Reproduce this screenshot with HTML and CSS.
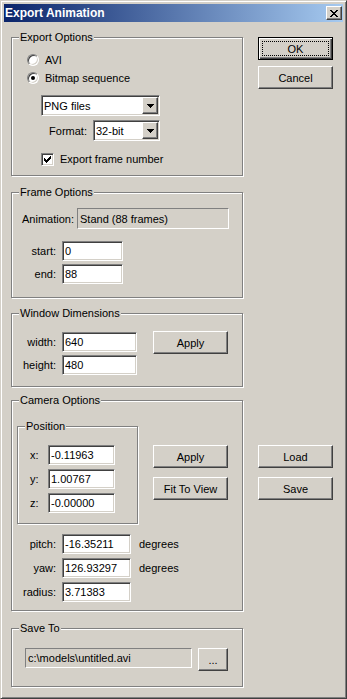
FILE: index.html
```html
<!DOCTYPE html>
<html lang="en">
<head>
    <meta charset="UTF-8">
    <meta name="viewport" content="width=device-width, initial-scale=1.0">
    <title>Export Animation</title>
    <link rel="stylesheet" href="styles.css">
</head>
<body>

    <div class="window">
        <div class="titlebar">
            <span class="title">Export Animation</span>
            <button class="close-btn raised">
                <svg width="8" height="7" viewBox="0 0 8 7"><path d="M0 0h2v1h-2zM6 0h2v1h-2zM1 1h2v1h-2zM5 1h2v1h-2zM2 2h4v1h-4zM3 3h2v1h-2zM2 4h4v1h-4zM1 5h2v1h-2zM5 5h2v1h-2zM0 6h2v1h-2zM6 6h2v1h-2z"/></svg>
            </button>
        </div>

        <div class="client">
            <div class="left-col">

                <fieldset class="group">
                    <legend>Export Options</legend>
                    <div class="export-body">
                        <div class="option-row"><span class="radio"></span>AVI</div>
                        <div class="option-row"><span class="radio checked"></span>Bitmap sequence</div>
                        <div class="combo combo-type">
                            <span class="combo-text">PNG files</span>
                            <span class="combo-btn raised"><svg width="7" height="4" viewBox="0 0 7 4"><path d="M0 0h7v1h-7zM1 1h5v1h-5zM2 2h3v1h-3zM3 3h1v1h-1z"/></svg></span>
                        </div>
                        <div class="format-row">
                            <span class="format-label">Format:</span>
                            <div class="combo combo-format">
                                <span class="combo-text">32-bit</span>
                                <span class="combo-btn raised"><svg width="7" height="4" viewBox="0 0 7 4"><path d="M0 0h7v1h-7zM1 1h5v1h-5zM2 2h3v1h-3zM3 3h1v1h-1z"/></svg></span>
                            </div>
                        </div>
                        <div class="option-row check-row">
                            <span class="checkbox"><svg width="7" height="7" viewBox="0 0 7 7"><path d="M6 0h1v1h-1zM5 1h2v1h-2zM0 2h1v1h-1zM4 2h3v1h-3zM0 3h2v1h-2zM3 3h3v1h-3zM0 4h5v1h-5zM1 5h3v1h-3zM2 6h1v1h-1z"/></svg></span>Export frame number
                        </div>
                    </div>
                </fieldset>

                <fieldset class="group frame-group">
                    <legend>Frame Options</legend>
                    <div class="frame-body">
                        <div class="anim-row">
                            <span class="anim-label">Animation:</span>
                            <div class="static anim-static">Stand (88 frames)</div>
                        </div>
                        <div class="frame-fields">
                            <div class="field-row"><span class="field-label">start:</span><input class="edit edit-frame" value="0"></div>
                            <div class="field-row"><span class="field-label">end:</span><input class="edit edit-frame" value="88"></div>
                        </div>
                    </div>
                </fieldset>

                <fieldset class="group window-group">
                    <legend>Window Dimensions</legend>
                    <div class="window-body">
                        <div class="dim-fields">
                            <div class="field-row"><span class="field-label">width:</span><input class="edit edit-dim" value="640"></div>
                            <div class="field-row"><span class="field-label">height:</span><input class="edit edit-dim" value="480"></div>
                        </div>
                        <button class="btn raised dim-apply">Apply</button>
                    </div>
                </fieldset>

                <fieldset class="group camera-group">
                    <legend>Camera Options</legend>
                    <div class="camera-body">
                        <div class="camera-top">
                            <fieldset class="group position-group">
                                <legend>Position</legend>
                                <div class="position-body">
                                    <div class="pos-row"><span class="pos-label">x:</span><input class="edit edit-pos" value="-0.11963"></div>
                                    <div class="pos-row"><span class="pos-label">y:</span><input class="edit edit-pos" value="1.00767"></div>
                                    <div class="pos-row"><span class="pos-label">z:</span><input class="edit edit-pos" value="-0.00000"></div>
                                </div>
                            </fieldset>
                            <div class="camera-buttons">
                                <button class="btn raised">Apply</button>
                                <button class="btn raised fit-btn">Fit To View</button>
                            </div>
                        </div>
                        <div class="angle-fields">
                            <div class="field-row"><span class="field-label">pitch:</span><input class="edit edit-angle" value="-16.35211"><span class="unit">degrees</span></div>
                            <div class="field-row"><span class="field-label">yaw:</span><input class="edit edit-angle" value="126.93297"><span class="unit">degrees</span></div>
                            <div class="field-row"><span class="field-label">radius:</span><input class="edit edit-angle" value="3.71383"></div>
                        </div>
                    </div>
                </fieldset>

                <fieldset class="group save-group">
                    <legend>Save To</legend>
                    <div class="save-body">
                        <div class="static path-static">c:\models\untitled.avi</div>
                        <button class="btn raised browse-btn">...</button>
                    </div>
                </fieldset>

            </div>

            <div class="right-col">
                <button class="btn raised btn-default">OK</button>
                <button class="btn raised cancel-btn">Cancel</button>
                <button class="btn raised load-btn">Load</button>
                <button class="btn raised save-btn">Save</button>
            </div>
        </div>
    </div>

</body>
</html>
```

FILE: styles.css
```css
body {
    margin: 0;
    font-family: "Liberation Sans", Arial, sans-serif;
    font-size: 11px;
    color: #000;
    background: #d4d0c8;
}

.window {
    width: 347px;
    height: 699px;
    box-sizing: border-box;
    padding: 3px;
    background: #d4d0c8;
    border: 1px solid;
    border-color: #d4d0c8 #404040 #404040 #d4d0c8;
    box-shadow: inset 1px 1px #fff, inset -1px -1px #808080;
}

/* title bar */
.titlebar {
    height: 18px;
    display: flex;
    align-items: center;
    padding-left: 1px;
    background: linear-gradient(to right, #0a246a, #a6caf0);
}

.title {
    color: #fff;
    font-weight: bold;
    font-size: 12px;
}

.close-btn {
    margin-left: auto;
    margin-right: 1px;
    width: 16px;
    height: 14px;
    padding: 0;
    display: flex;
    justify-content: center;
    align-items: center;
}

/* buttons */
.btn {
    width: 75px;
    height: 23px;
    padding: 0;
    font: inherit;
    color: #000;
    cursor: pointer;
}

/* 3d edges */
.raised {
    background: #d4d0c8;
    border: 1px solid;
    border-color: #fff #404040 #404040 #fff;
    box-shadow: inset -1px -1px #808080;
}

.btn-default {
    border-color: #000;
    box-shadow: inset 1px 1px #fff, inset -1px -1px #404040, inset -2px -2px #808080;
    outline: 1px dotted #000;
    outline-offset: -5px;
}

.edit, .combo, .checkbox {
    border: 1px solid;
    border-color: #808080 #fff #fff #808080;
    box-shadow: inset 1px 1px #404040, inset -1px -1px #d4d0c8;
    background: #fff;
}

.static {
    box-sizing: border-box;
    height: 20px;
    padding-left: 2px;
    display: flex;
    align-items: center;
    border: 1px solid;
    border-color: #808080 #fff #fff #808080;
    white-space: nowrap;
}

/* layout */
.client {
    display: flex;
    align-items: flex-start;
}

.left-col {
    width: 232px;
    padding: 9px 0 0 7px;
    display: flex;
    flex-direction: column;
}

.right-col {
    width: 75px;
    margin-left: 15px;
    padding-top: 15px;
    display: flex;
    flex-direction: column;
}

.cancel-btn { margin-top: 6px; }
.load-btn { margin-top: 356px; }
.save-btn { margin-top: 9px; }

/* group boxes */
.group {
    margin: 0;
    padding: 0;
    min-width: 0;
    box-sizing: border-box;
    width: 100%;
    border: 1px solid #808080;
    box-shadow: inset 1px 1px #fff, 1px 1px #fff;
}

.group legend {
    margin-left: 7px;
    padding: 0 1px;
    line-height: 13px;
    background: #d4d0c8;
}

.frame-group { margin-top: 10px; }
.window-group { margin-top: 9px; }
.camera-group { margin-top: 7px; }
.save-group { margin-top: 11px; }

/* export options */
.export-body {
    padding: 7px 0 7px 15px;
}

.option-row {
    height: 18px;
    display: flex;
    align-items: center;
}

.radio {
    width: 12px;
    height: 12px;
    box-sizing: border-box;
    margin-right: 6px;
    border-radius: 50%;
    background: #fff;
    border: 1px solid;
    border-color: #808080 #fff #fff #808080;
    box-shadow: inset 1px 1px #404040, inset -1px -1px #d4d0c8;
    display: flex;
    justify-content: center;
    align-items: center;
}

.radio.checked::after {
    content: "";
    width: 4px;
    height: 4px;
    border-radius: 50%;
    background: #000;
}

.combo {
    box-sizing: border-box;
    height: 21px;
    padding: 1px;
    display: flex;
    align-items: stretch;
}

.combo-text {
    flex: 1;
    padding-left: 1px;
    display: flex;
    align-items: center;
}

.combo-btn {
    width: 16px;
    box-sizing: border-box;
    display: flex;
    justify-content: center;
    align-items: center;
}

.combo-type {
    width: 119px;
    margin: 8px 0 0 14px;
}

.format-row {
    margin: 4px 0 0 14px;
    display: flex;
    align-items: center;
}

.format-label {
    width: 46px;
    margin-right: 6px;
    text-align: right;
}

.combo-format { width: 67px; }

.check-row {
    margin: 9px 0 0 14px;
}

.checkbox {
    width: 13px;
    height: 13px;
    box-sizing: border-box;
    margin-right: 6px;
    display: flex;
    justify-content: center;
    align-items: center;
}

/* fields */
.field-row {
    display: flex;
    align-items: center;
}

.field-label {
    width: 44px;
    margin-right: 6px;
    text-align: right;
}

.edit {
    box-sizing: border-box;
    height: 20px;
    margin: 0;
    padding: 0 2px;
    font: inherit;
    color: #000;
    outline: none;
}

.edit-frame { width: 61px; }
.edit-dim { width: 75px; }
.edit-pos { width: 67px; }
.edit-angle { width: 69px; }

/* frame options */
.frame-body {
    padding: 9px 0 13px 0;
}

.anim-row {
    display: flex;
    align-items: center;
}

.anim-label {
    width: 65px;
    padding-left: 10px;
    box-sizing: border-box;
}

.anim-static {
    width: 152px;
    height: 21px;
}

.frame-fields { margin-top: 12px; }
.frame-fields .field-row + .field-row { margin-top: 3px; }

/* window dimensions */
.window-body {
    padding: 12px 0 11px 0;
    display: flex;
    align-items: flex-start;
}

.dim-fields .field-row + .field-row { margin-top: 3px; }

.dim-apply {
    margin: -1px 0 0 16px;
}

/* camera options */
.camera-body {
    padding: 13px 0 8px 0;
}

.camera-top {
    display: flex;
    align-items: flex-start;
}

.position-group {
    width: 121px;
    margin-left: 5px;
}

.position-body {
    padding: 12px 0 10px 12px;
}

.pos-row {
    display: flex;
    align-items: center;
}

.pos-row + .pos-row { margin-top: 4px; }

.pos-label { width: 18px; }

.camera-buttons {
    margin: 25px 0 0 15px;
    display: flex;
    flex-direction: column;
}

.fit-btn { margin-top: 9px; }

.angle-fields { margin-top: 10px; }
.angle-fields .field-row + .field-row { margin-top: 4px; }

.unit { margin-left: 8px; }

/* save to */
.save-body {
    padding: 13px 0 15px 13px;
    display: flex;
    align-items: flex-start;
}

.path-static { width: 167px; }

.browse-btn {
    width: 30px;
    margin-left: 6px;
}
```
